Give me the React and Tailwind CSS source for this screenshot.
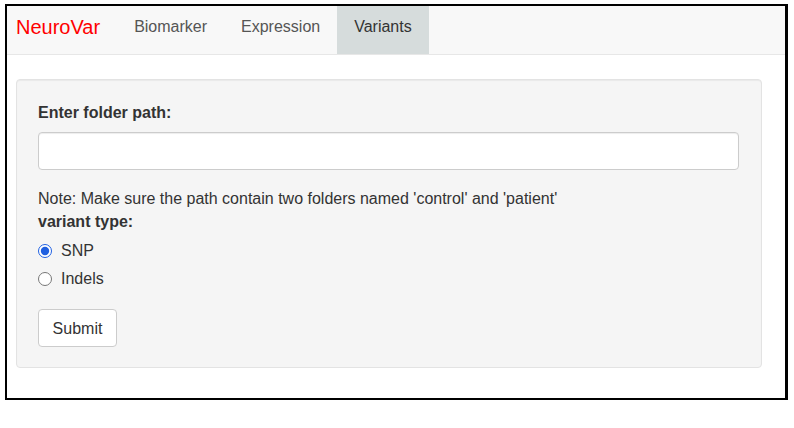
import React from "react";

export default function App() {
  return (
    <div
      className="w-[794px] h-[428px] bg-white pl-[5px] pt-[4px]"
      style={{ fontFamily: '"Liberation Sans", Arial, sans-serif' }}
    >
      <div className="w-[783px] h-[396px] border-2 border-r-[3px] border-black bg-white flex flex-col text-[#333]">
        {/* Navbar */}
        <nav className="h-[49px] bg-[#f8f8f8] border-b border-[#e7e7e7] flex items-stretch">
          <div className="pl-[9px] pr-[17px] flex items-center text-[20px] text-[#ff0000] pb-[6px]">
            NeuroVar
          </div>
          <div className="px-[17px] flex items-center text-[16px] text-[#555] pb-[7px]">Biomarker</div>
          <div className="px-[17px] flex items-center text-[16px] text-[#555] pb-[7px]">Expression</div>
          <div className="px-[17px] flex items-center text-[16px] text-[#333] bg-[#d6dcdc] pb-[7px]">Variants</div>
        </nav>

        {/* Content */}
        <div className="pl-[9px] pt-[24px]">
          <div className="w-[746px] h-[289px] bg-[#f5f5f5] border border-[#e3e3e3] rounded-[4px] shadow-[inset_0_1px_1px_rgba(0,0,0,0.05)] px-[21px] pt-[21px] text-[16px] leading-[23px]">
            <div className="font-bold">Enter folder path:</div>
            <input
              type="text"
              className="mt-[8px] block w-[701px] h-[38px] bg-white border border-[#ccc] rounded-[4px] shadow-[inset_0_1px_1px_rgba(0,0,0,0.075)] outline-none px-3"
            />
            <div className="mt-[17px]">
              Note: Make sure the path contain two folders named 'control' and 'patient'
            </div>
            <div className="font-bold">variant type:</div>
            <label className="mt-[6px] flex items-center h-[23px]">
              <input
                type="radio"
                name="vt"
                defaultChecked
                className="w-[14px] h-[14px] m-0 mr-[9px] accent-[#1f5fe0]"
              />
              <span>SNP</span>
            </label>
            <label className="mt-[5px] flex items-center h-[23px]">
              <input
                type="radio"
                name="vt"
                className="w-[14px] h-[14px] m-0 mr-[9px] accent-[#1f5fe0]"
              />
              <span>Indels</span>
            </label>
            <button className="mt-[19px] block w-[79px] h-[38px] bg-white border border-[#ccc] rounded-[4px] text-[16px] text-[#333]">
              Submit
            </button>
          </div>
        </div>
      </div>
    </div>
  );
}
